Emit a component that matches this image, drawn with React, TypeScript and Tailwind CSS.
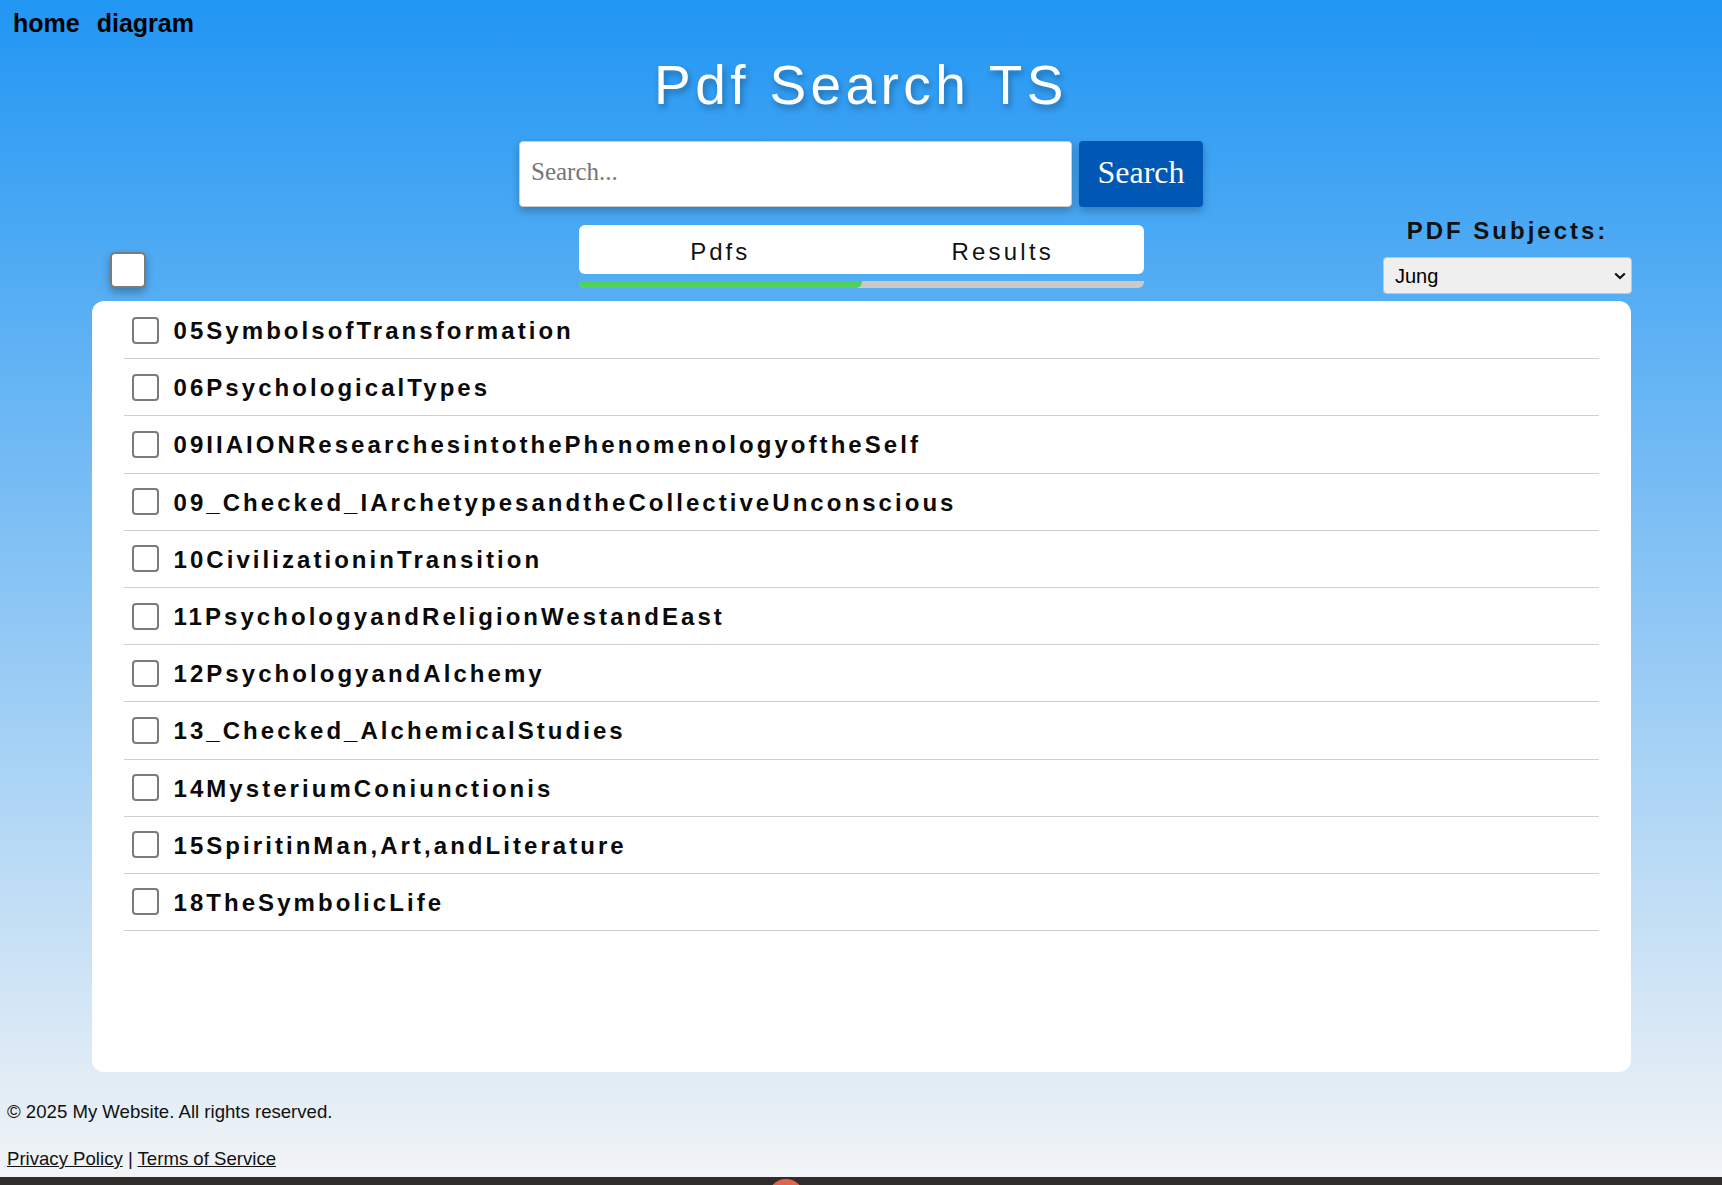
import {useState} from "react";

const pdfNames = [
  "05SymbolsofTransformation",
  "06PsychologicalTypes",
  "09IIAIONResearchesintothePhenomenologyoftheSelf",
  "09_Checked_IArchetypesandtheCollectiveUnconscious",
  "10CivilizationinTransition",
  "11PsychologyandReligionWestandEast",
  "12PsychologyandAlchemy",
  "13_Checked_AlchemicalStudies",
  "14MysteriumConiunctionis",
  "15SpiritinMan,Art,andLiterature",
  "18TheSymbolicLife",
];

function PdfRow({name}: {name: string}) {
  return (
    <label className="flex items-center h-[57.2px] border-b border-[#cfcfcf] pl-2">
      <input
        type="checkbox"
        className="appearance-none shrink-0 size-[27px] border-2 border-[#7b7b7b] rounded-[4px] bg-white mr-[15px]"
      />
      <span className="pt-[2px] text-[24px] leading-[28px] font-bold tracking-[3.05px] text-[#0a0a0a]">{name}</span>
    </label>
  );
}

export default function App() {
  const [tab, setTab] = useState<"pdfs" | "results">("pdfs");

  return (
    <div className="h-[1185px] overflow-hidden flex flex-col font-['Liberation_Sans',Arial,sans-serif]">
      <div className="h-[1177px] shrink-0 flex flex-col bg-[linear-gradient(to_bottom,#2196f3,#f2f4f6)]">
        {/* top nav */}
        <nav className="h-[44px] pt-[9px] pl-[13px] flex gap-[17px] text-[25px] leading-[28px] font-bold text-black">
          <a href="#">home</a>
          <a href="#">diagram</a>
        </nav>

        <h1 className="mt-[9px] h-[64px] text-center text-[55px] leading-[64px] tracking-[4.4px] font-normal text-white [text-shadow:2px_4px_6px_rgba(0,0,0,0.3)]">
          Pdf Search TS
        </h1>

        {/* search bar */}
        <div className="mt-[24px] flex justify-center gap-[7px] font-['Liberation_Serif','Times_New_Roman',serif]">
          <input
            type="text"
            placeholder="Search..."
            className="w-[553px] h-[66px] bg-white border border-[#cfcfcf] rounded-[4px] pl-[11px] pb-[4px] text-[25px] text-black placeholder:text-[#757575] shadow-[0_4px_8px_rgba(0,0,0,0.25)] outline-none"
          />
          <button className="w-[124px] h-[66px] bg-[#0057b4] rounded-[4px] pb-[5px] text-white text-[32px] shadow-[0_4px_8px_rgba(0,0,0,0.25)]">
            Search
          </button>
        </div>

        {/* controls */}
        <div className="mt-[10px] h-[84px] grid grid-cols-[579px_565px_1fr]">
          <div className="pl-[110px] pt-[35px]">
            <input
              type="checkbox"
              className="appearance-none block size-[36px] bg-white border-2 border-[#7b7b7b] rounded-[5px] shadow-[0_4px_8px_rgba(0,0,0,0.3)]"
            />
          </div>

          <div className="pt-[8px]">
            <div className="flex h-[49px] bg-white rounded-[6px]">
              <button
                onClick={() => setTab("pdfs")}
                className="flex-1 pt-[13px] self-start text-[24px] leading-[28px] tracking-[3px] text-[#111]"
              >
                Pdfs
              </button>
              <button
                onClick={() => setTab("results")}
                className="flex-1 pt-[13px] self-start text-[24px] leading-[28px] tracking-[3.2px] text-[#111]"
              >
                Results
              </button>
            </div>
            <div className="mt-[7px] flex h-[7px] bg-[#cacaca] rounded-b-[6px]">
              <div className={tab === "pdfs" ? "w-1/2 bg-[#4fd15a] rounded-b-[6px]" : "w-1/2"} />
              <div className={tab === "results" ? "w-1/2 bg-[#4fd15a] rounded-b-[6px]" : "w-1/2"} />
            </div>
          </div>

          <div className="pl-[239px]">
            <div className="w-[249px] flex flex-col">
              <div className="text-center text-[24px] leading-[28px] font-bold tracking-[3px] text-[#111]">
                PDF Subjects:
              </div>
              <div className="relative mt-[12px]">
                <select className="appearance-none w-full h-[37px] bg-[#efefef] border border-[#c6c6c6] rounded-[4px] pl-[11px] text-[20px] text-black outline-none">
                  <option>Jung</option>
                  <option>Freud</option>
                  <option>Adler</option>
                </select>
                <svg
                  className="absolute right-[6px] top-[15px] pointer-events-none"
                  width="12"
                  height="8"
                  viewBox="0 0 12 8"
                  fill="none"
                >
                  <path d="M1.2 1.5l4.8 4.6 4.8-4.6" stroke="#111" strokeWidth="2.2" />
                </svg>
              </div>
            </div>
          </div>
        </div>

        {/* pdf list */}
        <div className="mx-auto w-[1539px] h-[771px] shrink-0 bg-white rounded-xl px-8 pt-[1px]">
          {pdfNames.map((name) => (
            <PdfRow key={name} name={name} />
          ))}
        </div>

        <footer className="pl-[7px] text-[18.6px] leading-[22px] text-[#111]">
          <p className="mt-[29px]">© 2025 My Website. All rights reserved.</p>
          <p className="mt-[25px]">
            <a href="#" className="underline">Privacy Policy</a> | <a href="#" className="underline">Terms of Service</a>
          </p>
        </footer>
      </div>

      <div className="h-[8px] shrink-0 bg-[#302c2b] pl-[768px] pt-[2px] overflow-hidden">
        <div className="size-[36px] rounded-full bg-[#e0654f]" />
      </div>
    </div>
  );
}
